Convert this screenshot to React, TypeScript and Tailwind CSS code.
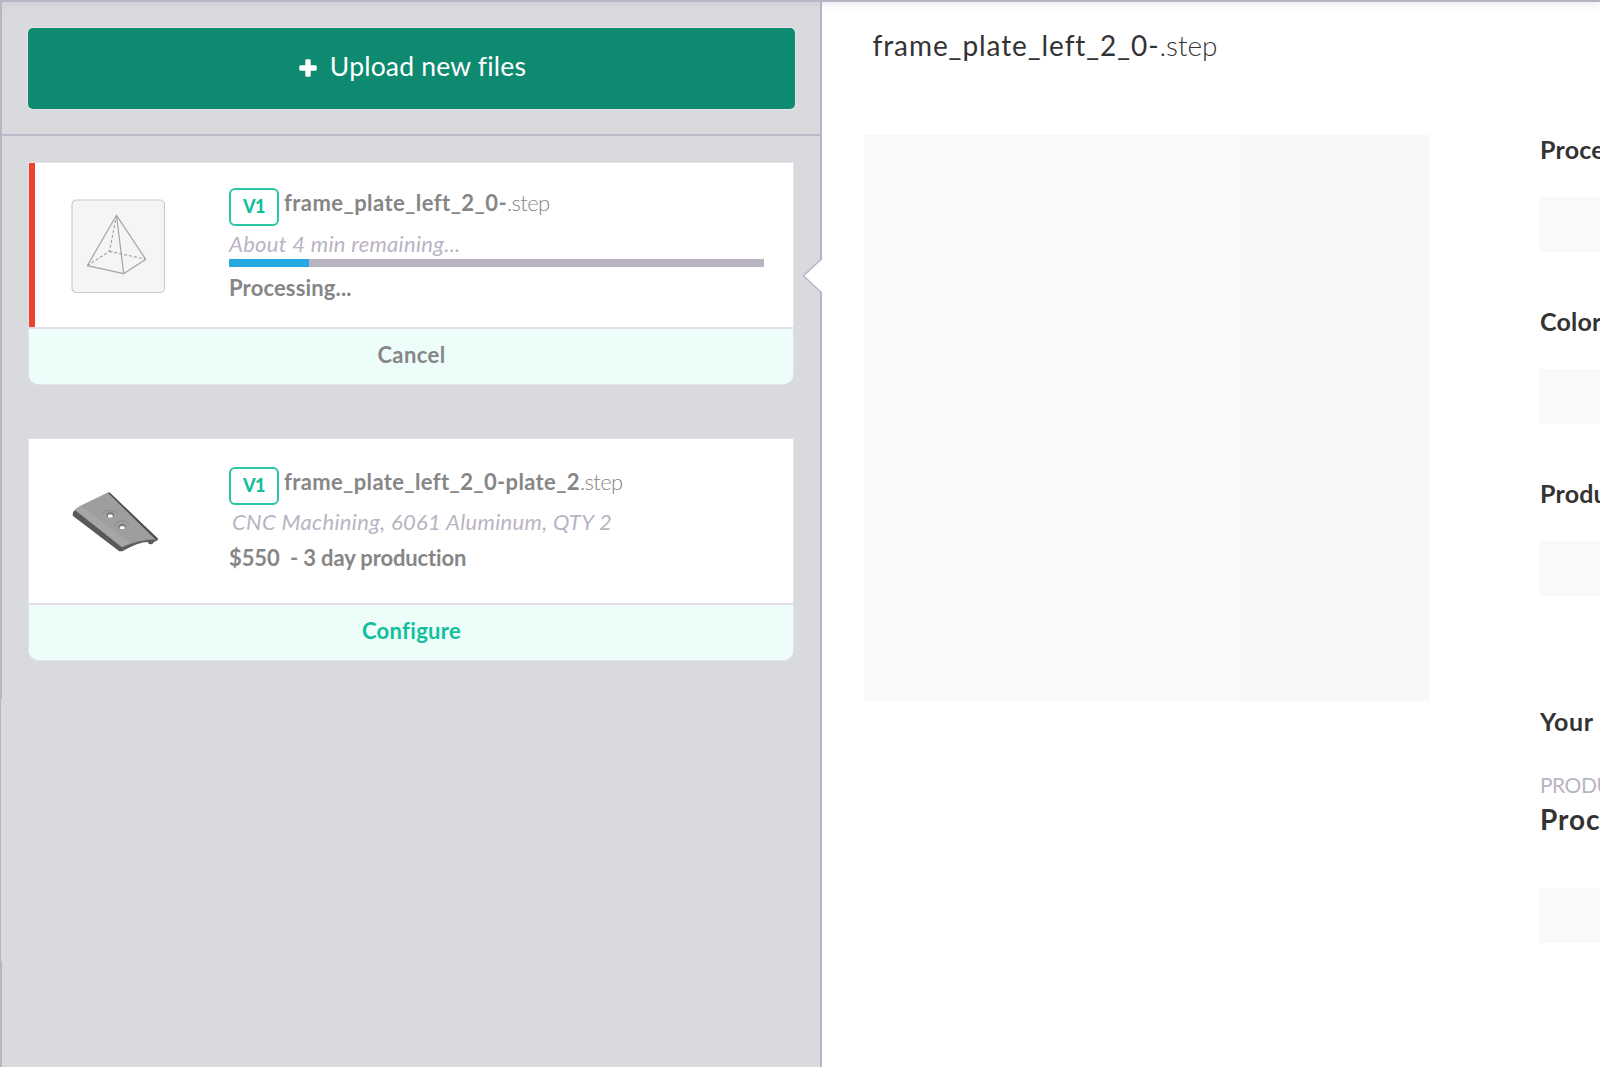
import type { ReactNode } from "react";

function PyramidThumb() {
  return (
    <svg width="94" height="94" viewBox="0 0 94 94" fill="none" stroke="#a3a4a5" strokeWidth="1.2" strokeLinejoin="round">
      <rect x="1" y="1" width="92.5" height="92.5" rx="4.5" fill="#f4f6f6" stroke="#c9caca" strokeWidth="1.2" />
      <path d="M45.5 16.3 16.3 66.7 52.7 74.7 74.7 60.3ZL52.7 74.7" />
      <path d="M45.5 16.3 38.5 52.3 16.3 66.7M38.5 52.3 74.7 60.3" strokeDasharray="3 2" />
    </svg>
  );
}

function PlateThumb() {
  return (
    <svg width="110" height="80" viewBox="0 0 330 240">
      <path d="M39 96 48 88 186 198 204 202 186 214 178 214 38 107Z" fill="#585858" />
      <path d="M44 90Q52 82 72 72L142 38 150 40 294 176 288 182Q272 180 250 184L200 200 186 202Z" fill="#9e9e9e" />
      <path d="M46 88 62 78 212 190 186 202Z" fill="#a6a6a6" />
      <path d="M142 37 150 38 295 177 289 181Z" fill="#4e4e4e" />
      <path d="M184 203Q232 182 262 180 276 179 291 176L294 180 282 186 276 193 266 192 264 186Q236 186 186 214Z" fill="#5c5c5c" />
      <path d="M184 201Q232 179 288 177" fill="none" stroke="#8a8a8a" strokeWidth="2" />
      <g fill="none" stroke="#858585" strokeWidth="2">
        <path d="M128 104Q132 91 150 91 168 92 174 102" />
        <path d="M164 138Q167 124 186 122 204 123 210 135" />
      </g>
      <ellipse cx="151" cy="105" rx="11" ry="8" fill="#757575" />
      <ellipse cx="151" cy="108" rx="8" ry="5" fill="#fff" />
      <ellipse cx="187" cy="140" rx="11" ry="8" fill="#757575" />
      <ellipse cx="187" cy="143" rx="8" ry="5" fill="#fff" />
    </svg>
  );
}

function TitleRow({ name, nameClass }: { name: string; nameClass: string }) {
  return (
    <div className="flex items-start">
      <span className="flex h-[38px] w-[50px] justify-center rounded-[6px] border-2 border-[#2cc5a6] pt-px text-[18px] leading-[30px] font-black tracking-[-0.6px] text-[#12bf9c]">
        V1
      </span>
      <div className="ml-[5px] pt-px text-[22px] leading-7 whitespace-nowrap text-[#868686]">
        <span className={nameClass}>{name}</span>
        <span className="font-light tracking-[-0.6px]">.step</span>
      </div>
    </div>
  );
}

function FileCard({ active, thumb, action, children }: { active?: boolean; thumb: ReactNode; action: ReactNode; children: ReactNode }) {
  return (
    <article className="overflow-hidden rounded-b-[11px] border border-[#e5e2ea] bg-white">
      <div className="flex h-[164px]">
        <div className="flex w-[200px] shrink-0">
          {active && <div className="w-[5.5px] bg-[#ea4430]" />}
          {thumb}
        </div>
        <div className="min-w-0 flex-1">{children}</div>
      </div>
      <div className="flex h-[57px] justify-center border-t-2 border-[#e3dfe8] bg-[#ecfdfa] pt-[11px] pl-px text-[22px] leading-[30px] font-bold">
        {action}
      </div>
    </article>
  );
}

function Field({ label }: { label: string }) {
  return (
    <div className="h-[172px]">
      <div className="h-[62px] pl-[1px] text-[25px] leading-[28px] font-bold tracking-[0.2px]">{label}</div>
      <div className="h-[55px] bg-[#f9f9f9]" />
    </div>
  );
}

export default function App() {
  return (
    <div className="flex h-[1067px] w-[1600px] flex-col overflow-hidden bg-white font-['Lato',sans-serif]">
      <div className="relative z-10 h-[2px] shrink-0 bg-[#bab3c4] shadow-[0_1px_7px_rgba(186,179,200,0.9)]" />
      <div className="flex min-h-0 flex-1">
        <aside className="relative flex w-[822px] shrink-0 border-r-[2px] border-[#bab3c2] bg-[#d9dade]">
          <div className="w-[2px] shrink-0">
            <div className="h-[697px] w-[2px] bg-[#bab3c4]" />
            <div className="h-[262px] w-px bg-[#bab3c4]" />
            <div className="h-[106px] w-[2px] bg-[#bab3c4]" />
          </div>
          <div className="flex-1">
            <div className="h-[134px] border-b-2 border-[#bfb9c7] pt-[26px] pl-[25.5px]">
              <button className="flex h-[81px] w-[767px] items-center justify-center rounded-[5px] bg-[#0e8a70] pb-[5px] text-white shadow-[0_0_0_1px_#e3e4e8]">
                <svg className="mt-[3px] mr-[13px] ml-[3px]" width="18" height="18" viewBox="0 0 18 18" fill="#fff">
                  <rect x="0.3" y="6.3" width="17.4" height="5.4" rx="1.2" />
                  <rect x="6.3" y="0.3" width="5.4" height="17.4" rx="1.2" />
                </svg>
                <span className="text-[26.5px] leading-[30px] tracking-[0.2px]">Upload new files</span>
              </button>
            </div>
            <div className="flex flex-col gap-[53px] pt-[26px] pr-[26px] pl-[26px]">
              <FileCard
                active
                thumb={<div className="mt-[36px] ml-[36px]"><PyramidThumb /></div>}
                action={<span className="tracking-[0.4px] text-[#868686]">Cancel</span>}
              >
                <div className="pt-[25px] text-[22px] leading-[30px]">
                  <TitleRow name="frame_plate_left_2_0-" nameClass="font-bold tracking-[0.43px]" />
                  <div className="mt-[3px] tracking-[0.3px] text-[#bab3c4] italic">About 4 min remaining...</div>
                  <div className="h-[8px] w-[534.5px] bg-[#bab3c2]">
                    <div className="h-full w-[80px] bg-[#26a9e0]" />
                  </div>
                  <div className="mt-[6px] font-bold tracking-[0.15px] text-[#868686]">Processing...</div>
                </div>
              </FileCard>
              <FileCard
                thumb={<div className="mt-[41px] ml-[31px]"><PlateThumb /></div>}
                action={<span className="tracking-[0.3px] text-[#12bf9c]">Configure</span>}
              >
                <div className="pt-[28px] text-[22px] leading-[30px]">
                  <TitleRow name="frame_plate_left_2_0-plate_2" nameClass="font-bold tracking-[0.36px]" />
                  <div className="mt-[2px] pl-[3px] tracking-[0.33px] text-[#bab3c4] italic">CNC Machining, 6061 Aluminum, QTY 2</div>
                  <div className="mt-[6px] font-bold tracking-[-0.13px] text-[#868686]">{"$550\u00a0 - 3 day production"}</div>
                </div>
              </FileCard>
            </div>
          </div>
          <svg className="absolute top-[256px] -right-[2px]" width="20" height="36" viewBox="0 0 20 36">
            <path d="M20 1.5 1.5 18 20 34.5Z" fill="#fff" />
            <path d="M19.3 1 1.5 17.8 19.3 34.5" fill="none" stroke="#bab3c2" strokeWidth="1.4" />
          </svg>
        </aside>
        <main className="min-w-0 flex-1 text-[#333333]">
          <h1 className="h-[133px] pt-[28px] pl-[50.5px] text-[28px] leading-[30px]">
            <span className="tracking-[0.92px]">frame_plate_left_2_0-</span>
            <span className="font-light">.step</span>
          </h1>
          <div className="flex pl-[42px]">
            <div className="flex h-[566px] w-[566px] shrink-0 bg-[#f9f9f9]">
              <div className="w-[377px]" />
              <div className="w-[47px] bg-[#f6f8fa]" />
              <div className="w-[102px] bg-[#f7f7f7]" />
              <div className="flex-1 bg-[#f6f8fa]" />
            </div>
            <div className="ml-[109px] w-[61px] shrink-0 overflow-hidden whitespace-nowrap">
              <Field label="Process" />
              <Field label="Color" />
              <Field label="Production" />
              <div className="mt-[55px] pl-[1px] text-[25px] leading-[30px] font-bold tracking-[0.6px]">Your configuration</div>
              <div className="mt-[34px] pl-[1px] text-[21px] leading-[30px] tracking-[-0.5px] text-[#bab3c4]">PRODUCTION</div>
              <div className="mt-[4px] pl-[1px] text-[28px] leading-[30px] font-bold tracking-[0.9px]">Processing</div>
              <div className="mt-[54px] h-[55px] bg-[#f9f9f9]" />
            </div>
          </div>
        </main>
      </div>
    </div>
  );
}
